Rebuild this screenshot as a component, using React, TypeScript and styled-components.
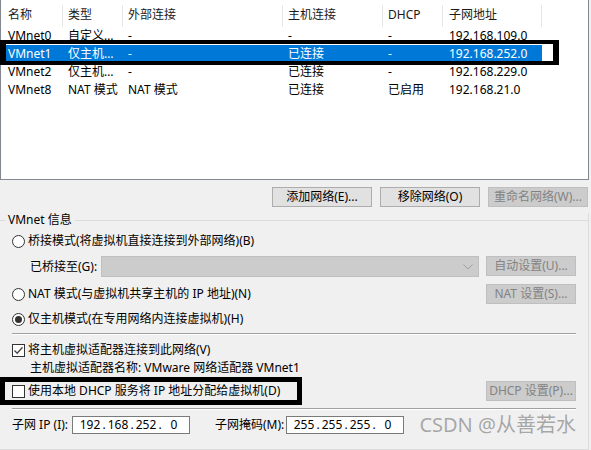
import React from 'react';
import styled, { createGlobalStyle } from 'styled-components';

const Global = createGlobalStyle`
  html, body { margin: 0; padding: 0; background: #f0f0f0; }
  body {
    font-family: "Noto Sans", "Noto Sans CJK SC", sans-serif;
    font-size: 12px;
    color: #000;
  }
  * { box-sizing: border-box; }
`;

const Root = styled.div`
  position: relative;
  width: 591px;
  height: 450px;
  overflow: hidden;
  background: #f0f0f0;
  display: flex;
  flex-direction: column;
`;

const ListBox = styled.div`
  width: 589px;
  height: 180px;
  flex-shrink: 0;
  background: #fff;
  border: 1px solid #828790;
  border-top: none;
  display: flex;
  flex-direction: column;
`;

const HeaderRow = styled.div`
  display: flex;
  height: 27px;
`;

const HeaderCell = styled.div<{ $w: number; $pl: number }>`
  position: relative;
  width: ${p => p.$w}px;
  padding: 3px 0 0 ${p => p.$pl}px;
  display: flex;
  align-items: center;
  line-height: 16px;
  white-space: nowrap;
  color: #1a1a1a;
  &::after {
    content: "";
    position: absolute;
    right: 0;
    top: 5px;
    bottom: 0;
    width: 1px;
    background: #e5e5e5;
  }
`;

const DataRow = styled.div<{ $sel?: boolean }>`
  display: flex;
  width: 541px;
  height: 18px;
  background: ${p => (p.$sel ? '#0078d7' : 'transparent')};
  color: ${p => (p.$sel ? '#fff' : '#000')};
`;

const Cell = styled.div<{ $w: number; $pl: number }>`
  width: ${p => p.$w}px;
  padding-left: ${p => p.$pl}px;
  line-height: 18px;
  white-space: nowrap;
  overflow: hidden;
`;

const ButtonBar = styled.div`
  display: flex;
  justify-content: flex-end;
  gap: 8px;
  margin-top: 7px;
  padding-right: 3px;
`;

const WinButton = styled.button<{ $w?: number }>`
  font: inherit;
  font-size: 12px;
  width: ${p => p.$w ?? 100}px;
  height: 20px;
  padding: 0;
  line-height: 16px;
  background: #e1e1e1;
  border: 1px solid #adadad;
  color: #000;
  white-space: nowrap;
  &:disabled {
    background: #cccccc;
    border-color: #bfbfbf;
    color: #838383;
  }
`;

const GroupBox = styled.div`
  margin-top: 6px;
  width: 589px;
  flex: 1;
  border-right: 1px solid #dcdcdc;
  border-bottom: 1px solid #dcdcdc;
  display: flex;
  flex-direction: column;
`;

const GroupTitle = styled.div`
  display: flex;
  align-items: center;
  height: 14px;
`;

const TitleLine = styled.div<{ $w?: number }>`
  height: 1px;
  background: #dcdcdc;
  ${p => (p.$w ? `width: ${p.$w}px;` : 'flex: 1;')}
`;

const TitleText = styled.span`
  padding: 0 3px 0 2px;
  line-height: 14px;
  white-space: nowrap;
`;

const GroupContent = styled.div`
  display: flex;
  flex-direction: column;
  padding: 0 12px;
`;

const OptionRow = styled.div<{ $mt: number; $h?: number; $indent?: number }>`
  display: flex;
  align-items: center;
  margin-top: ${p => p.$mt}px;
  height: ${p => p.$h ?? 18}px;
  padding-left: ${p => p.$indent ?? 0}px;
  white-space: nowrap;
  line-height: 16px;
`;

const Label = styled.span<{ $w?: number; $ml?: number }>`
  ${p => (p.$w ? `width: ${p.$w}px; flex-shrink: 0;` : '')}
  margin-left: ${p => p.$ml ?? 0}px;
  white-space: nowrap;
`;

const RadioCircle = styled.span<{ $on?: boolean }>`
  width: 13px;
  height: 13px;
  border-radius: 50%;
  border: 1px solid #333;
  background: #fff;
  margin-right: 3px;
  flex-shrink: 0;
  display: flex;
  align-items: center;
  justify-content: center;
  &::before {
    content: "";
    width: 7px;
    height: 7px;
    border-radius: 50%;
    background: ${p => (p.$on ? '#333' : 'transparent')};
  }
`;

const CheckBoxBox = styled.span`
  width: 13px;
  height: 13px;
  border: 1px solid #333;
  background: #fff;
  margin-right: 3px;
  flex-shrink: 0;
  display: flex;
  align-items: center;
  justify-content: center;
`;

const SelectBox = styled.div`
  width: 378px;
  height: 21px;
  background: #cccccc;
  border: 1px solid #bfbfbf;
  display: flex;
  align-items: center;
  justify-content: flex-end;
  padding-right: 5px;
  flex-shrink: 0;
`;

const RightButton = styled(WinButton)`
  margin-left: auto;
`;

const SideButton = styled(WinButton)`
  margin-left: 7px;
  align-self: flex-start;
`;

const Separator = styled.div<{ $mt: number }>`
  margin-top: ${p => p.$mt}px;
  height: 1px;
  background: #a0a0a0;
  box-shadow: 0 1px 0 #fff;
`;

const IpInput = styled.div`
  width: 118px;
  height: 18px;
  background: #fff;
  border: 1px solid #7a7a7a;
  display: flex;
  align-items: center;
  padding-left: 5px;
  flex-shrink: 0;
`;

const IpSeg = styled.span`
  width: 24px;
  text-align: center;
  line-height: 16px;
`;

const IpDot = styled.span`
  width: 4px;
  text-align: center;
  line-height: 16px;
`;

const Watermark = styled.span`
  margin-left: auto;
  font-size: 20px;
  line-height: 20px;
  color: #a6a6a6;
  white-space: nowrap;
  text-shadow: 0 0 1px #fff;
`;

const Annotation = styled.div<{ $x: number; $y: number; $w: number; $h: number; $tb: number; $lr: number }>`
  position: absolute;
  left: ${p => p.$x}px;
  top: ${p => p.$y}px;
  width: ${p => p.$w}px;
  height: ${p => p.$h}px;
  border-style: solid;
  border-color: #000;
  border-width: ${p => p.$tb}px ${p => p.$lr}px;
  pointer-events: none;
`;

const cols = [62, 60, 160, 100, 60, 99];
const pads = [7, 5, 5, 5, 5, 6];
const headers = ['名称', '类型', '外部连接', '主机连接', 'DHCP', '子网地址'];
const rows: { cells: string[]; sel?: boolean }[] = [
  { cells: ['VMnet0', '自定义…', '-', '-', '-', '192.168.109.0'] },
  { cells: ['VMnet1', '仅主机…', '-', '已连接', '-', '192.168.252.0'], sel: true },
  { cells: ['VMnet2', '仅主机…', '-', '已连接', '-', '192.168.229.0'] },
  { cells: ['VMnet8', 'NAT 模式', 'NAT 模式', '已连接', '已启用', '192.168.21.0'] },
];

const Ip: React.FC<{ parts: string[] }> = ({ parts }) => (
  <IpInput>
    {parts.map((p, i) => (
      <React.Fragment key={i}>
        <IpSeg>{p}</IpSeg>
        {i < parts.length - 1 && <IpDot>.</IpDot>}
      </React.Fragment>
    ))}
  </IpInput>
);

export default function App() {
  return (
    <>
      <Global />
      <Root>
        <ListBox>
          <HeaderRow>
            {headers.map((h, i) => (
              <HeaderCell key={h} $w={cols[i]} $pl={pads[i]}>{h}</HeaderCell>
            ))}
          </HeaderRow>
          {rows.map((r, ri) => (
            <DataRow key={ri} $sel={r.sel}>
              {r.cells.map((c, i) => (
                <Cell key={i} $w={cols[i]} $pl={pads[i]}>{c}</Cell>
              ))}
            </DataRow>
          ))}
        </ListBox>

        <ButtonBar>
          <WinButton>添加网络(E)...</WinButton>
          <WinButton>移除网络(O)</WinButton>
          <WinButton disabled>重命名网络(W)...</WinButton>
        </ButtonBar>

        <GroupBox>
          <GroupTitle>
            <TitleLine $w={6} />
            <TitleText>VMnet 信息</TitleText>
            <TitleLine />
          </GroupTitle>
          <GroupContent>
            <OptionRow $mt={5}>
              <RadioCircle />
              <Label>桥接模式(将虚拟机直接连接到外部网络)(B)</Label>
            </OptionRow>
            <OptionRow $mt={6} $h={21} $indent={18}>
              <Label $w={71}>已桥接至(G):</Label>
              <SelectBox>
                <svg width="10" height="6" viewBox="0 0 10 6">
                  <polyline points="0.5,0.5 5,5 9.5,0.5" fill="none" stroke="#a0a0a0" strokeWidth="1" />
                </svg>
              </SelectBox>
              <SideButton $w={90} disabled>自动设置(U)...</SideButton>
            </OptionRow>
            <OptionRow $mt={7} $h={20}>
              <RadioCircle />
              <Label>NAT 模式(与虚拟机共享主机的 IP 地址)(N)</Label>
              <RightButton $w={90} disabled>NAT 设置(S)...</RightButton>
            </OptionRow>
            <OptionRow $mt={6}>
              <RadioCircle $on />
              <Label>仅主机模式(在专用网络内连接虚拟机)(H)</Label>
            </OptionRow>
            <Separator $mt={5} />
            <OptionRow $mt={7}>
              <CheckBoxBox>
                <svg width="11" height="11" viewBox="0 0 11 11">
                  <polyline points="1.5,5.5 4.2,8.3 9.5,2.2" fill="none" stroke="#444" strokeWidth="1.3" />
                </svg>
              </CheckBoxBox>
              <Label>将主机虚拟适配器连接到此网络(V)</Label>
            </OptionRow>
            <OptionRow $mt={1} $h={16} $indent={18}>
              <Label>主机虚拟适配器名称: VMware 网络适配器 VMnet1</Label>
            </OptionRow>
            <OptionRow $mt={5} $h={20}>
              <CheckBoxBox />
              <Label>使用本地 DHCP 服务将 IP 地址分配给虚拟机(D)</Label>
              <RightButton $w={90} disabled>DHCP 设置(P)...</RightButton>
            </OptionRow>
            <Separator $mt={7} />
            <OptionRow $mt={7}>
              <Label $w={60}>子网 IP (I):</Label>
              <Ip parts={['192', '168', '252', '0']} />
              <Label $w={71} $ml={25}>子网掩码(M):</Label>
              <Ip parts={['255', '255', '255', '0']} />
              <Watermark>CSDN @从善若水</Watermark>
            </OptionRow>
          </GroupContent>
        </GroupBox>

        <Annotation $x={0} $y={40} $w={559} $h={25} $tb={4} $lr={6} />
        <Annotation $x={0} $y={377} $w={302} $h={28} $tb={5} $lr={5} />
      </Root>
    </>
  );
}
